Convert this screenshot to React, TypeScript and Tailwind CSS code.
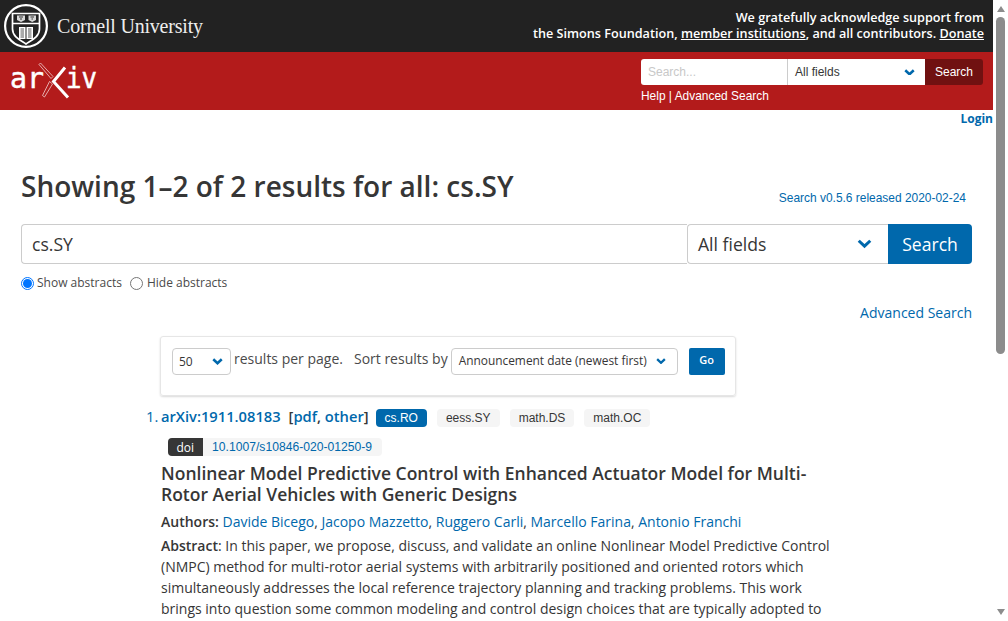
import React from "react";

const Chevron = ({ w, sw = 3, cls = "" }: { w: number; sw?: number; cls?: string }) => (
  <svg width={w} height={w * 0.62} viewBox="0 0 13 8" className={cls} fill="none">
    <path d="M1.5 1.5 L6.5 6.2 L11.5 1.5" stroke="#0068ac" strokeWidth={sw} />
  </svg>
);

const CornellSeal = () => (
  <svg width="46" height="46" viewBox="0 0 46 46" fill="none" className="shrink-0">
    <circle cx="23" cy="23" r="20.9" stroke="#fff" strokeWidth="2.2" />
    <path d="M9.5 10.5 H36.5 V26 C36.5 34 28 37.5 23 41 C18 37.5 9.5 34 9.5 26 Z" stroke="#fff" strokeWidth="1.7" fill="#222" />
    <path d="M9.5 20.5 H36.5" stroke="#fff" strokeWidth="1.5" />
    <path d="M14 12.5 H22 V17 L18 19 L14 17 Z M25.5 12.5 H33 V17 L29.2 19 L25.5 17 Z" fill="#d8d8d8" />
    <path d="M16 14 H20 M27.5 14 H31 M17 16 H19 M28.5 16 H30" stroke="#333" strokeWidth="1" />
    <path d="M16 24 H22.5 V36 H16 Z M23.5 24 H30 V36 H23.5 Z" fill="#fff" />
    <path d="M17.5 26 H21 M17.5 28 H21 M17.5 30 H21 M17.5 32 H21 M17.5 34 H21 M25 26 H28.5 M25 28 H28.5 M25 30 H28.5 M25 32 H28.5 M25 34 H28.5" stroke="#444" strokeWidth="0.9" />
  </svg>
);

const ArxivLogo = () => (
  <svg width="96" height="42" viewBox="0 0 96 42" fill="none" className="shrink-0">
    <text x="0" y="28" fill="#fff" stroke="#fff" strokeWidth="0.5" fontFamily="'DejaVu Sans Mono', monospace" fontSize="29" textLength="34" lengthAdjust="spacingAndGlyphs">ar</text>
    <text x="56" y="28" fill="#fff" stroke="#fff" strokeWidth="0.5" fontFamily="'DejaVu Sans Mono', monospace" fontSize="29" textLength="31" lengthAdjust="spacingAndGlyphs">iv</text>
    <path d="M30.5 3 L29 4.5 L41 18.5 L43 16.5 Z" stroke="#f0d0d0" strokeWidth="0.8" fill="#b31b1b" />
    <path d="M39.5 21.5 L32.5 35.5 L34.5 37 L42.5 24 Z" stroke="#f0d0d0" strokeWidth="0.8" fill="#b31b1b" />
    <path d="M55 7.5 L43.5 21.5 L58 37.5" stroke="#fff" strokeWidth="3" />
  </svg>
);

const Tag = ({ children, primary }: { children: React.ReactNode; primary?: boolean }) => (
  <span
    className={`inline-flex h-[18px] items-center rounded-[4px] px-[9px] font-['Liberation_Sans',sans-serif] text-[12px] ${
      primary ? "bg-[#0068ac] text-white" : "bg-[#f5f5f5] text-[#363636]"
    }`}
  >
    {children}
  </span>
);

const Author = ({ children }: { children: React.ReactNode }) => <a className="text-[#0068ac]">{children}</a>;

const Scrollbar = () => (
  <div className="flex w-[15px] shrink-0 flex-col items-center bg-white">
    <div className="flex h-[17px] w-full items-center justify-center pt-[1px]">
      <div className="h-0 w-0 border-x-[4.5px] border-b-[6px] border-x-transparent border-b-[#8c8c8c]" />
    </div>
    <div className="h-[337px] w-[9px] rounded-[4.5px] bg-[#8c8c8c]" />
    <div className="flex-1" />
    <div className="flex h-[17px] w-full items-center justify-center pb-[1px]">
      <div className="h-0 w-0 border-x-[4.5px] border-t-[6px] border-x-transparent border-t-[#8c8c8c]" />
    </div>
  </div>
);

export default function App() {
  return (
    <div className="flex h-[621px] w-[1008px] overflow-hidden bg-white font-['Open_Sans',sans-serif] text-[#363636]">
      <div className="flex w-[993px] shrink-0 flex-col overflow-hidden">
        <header className="flex h-[52px] shrink-0 items-center justify-between bg-[#222222] pl-[3px] pr-[9px] text-white">
          <div className="flex items-center gap-[8px]">
            <CornellSeal />
            <span className="font-['Liberation_Serif',serif] text-[20px] tracking-[-0.2px] text-[#eeeeee]">Cornell University</span>
          </div>
          <div className="pb-[2px] text-right text-[12.64px] font-semibold leading-[16px]">
            <div>We gratefully acknowledge support from</div>
            <div>
              the Simons Foundation, <a className="underline">member institutions</a>, and all contributors. <a className="underline">Donate</a>
            </div>
          </div>
        </header>

        <div className="flex h-[58px] shrink-0 justify-between bg-[#b31b1b] pl-[10px] pr-[10px]">
          <div className="pt-[8px]">
            <ArxivLogo />
          </div>
          <div className="pt-[7px] font-['Liberation_Sans',sans-serif] text-[12px]">
            <div className="flex h-[26px] w-[342px]">
              <div className="flex w-[147px] items-center rounded-l-[3px] border-r border-[#cccccc] bg-white pl-[7px] text-[#c8c8c8]">Search...</div>
              <div className="flex w-[137px] items-center justify-between bg-white pl-[7px] pr-[10px] text-[#363636]">
                All fields
                <Chevron w={11} />
              </div>
              <div className="flex w-[58px] items-start justify-center rounded-r-[3px] bg-[#701111] pt-[4px] text-white">Search</div>
            </div>
            <div className="mt-[3px] text-[11.95px] text-white">Help | Advanced Search</div>
          </div>
        </div>

        <div className="flex justify-end pt-[1px] text-[12px] font-bold leading-[16px] text-[#0068ac]">Login</div>

        <main className="pl-[21px] pr-[21px]">
          <div className="mt-[39px] flex items-start justify-between pr-[6px]">
            <h1 className="text-[28px] font-semibold leading-[40px] text-[#363636]">Showing 1–2 of 2 results for all: cs.SY</h1>
            <span className="mt-[24px] font-['Liberation_Sans',sans-serif] text-[11.95px] leading-[16px] text-[#0068ac]">Search v0.5.6 released 2020-02-24</span>
          </div>

          <div className="mt-[18px] flex h-[40px] text-[17.6px]">
            <div className="flex flex-1 items-center rounded-l-[4px] border border-[#cccccc] border-r-0 pl-[10px] text-[#363636]">cs.SY</div>
            <div className="flex w-[201px] items-center justify-between rounded-l-[4px] border border-r-0 border-[#cccccc] pl-[10px] pr-[16px]">
              All fields
              <Chevron w={15} sw={2.6} />
            </div>
            <div className="flex w-[84px] items-center justify-center rounded-r-[4px] bg-[#0068ac] text-white">Search</div>
          </div>

          <div className="mt-[10px] flex items-center text-[12px] leading-[18px] text-[#4a4a4a]">
            <span className="flex h-[13px] w-[13px] items-center justify-center rounded-full border border-[#0075ff]">
              <span className="h-[9px] w-[9px] rounded-full bg-[#0075ff]" />
            </span>
            <span className="ml-[3px]">Show abstracts</span>
            <span className="ml-[8px] h-[13px] w-[13px] rounded-full border border-[#767676]" />
            <span className="ml-[4px]">Hide abstracts</span>
          </div>

          <div className="mt-[11px] text-right text-[14px] leading-[20px] text-[#0068ac]">Advanced Search</div>

          <div className="ml-[139px] mt-[13px] flex h-[60px] w-[576px] items-start rounded-[3px] border border-[#e6e6e6] pl-[11px] pt-[11px] shadow-[0_1px_2px_rgba(0,0,0,0.15)]">
            <div className="flex h-[27px] w-[59px] items-center justify-between rounded-[4px] border border-[#cccccc] pl-[6px] pr-[7px] text-[12px]">
              50
              <Chevron w={11} />
            </div>
            <span className="ml-[3px] mt-[1px] text-[14px] leading-[20px] text-[#4a4a4a]">results per page.</span>
            <span className="ml-[11px] mt-[1px] text-[14px] leading-[20px] text-[#4a4a4a]">Sort results by</span>
            <div className="ml-[3px] flex h-[27px] w-[227px] items-center justify-between rounded-[4px] border border-[#cccccc] pb-[1px] pl-[7px] pr-[11px] text-[11.9px]">
              Announcement date (newest first)
              <Chevron w={10} />
            </div>
            <div className="ml-[11px] flex h-[27px] w-[36px] items-start justify-center rounded-[2px] bg-[#0068ac] pt-[4px] text-[11px] font-semibold text-white">Go</div>
          </div>

          <ol className="ml-[125px] mt-[10px] w-[685px] text-[14px] leading-[21px]">
            <li className="flex">
              <span className="w-[15px] shrink-0 text-[14.7px] text-[#0068ac]">1.</span>
              <div className="min-w-0 flex-1">
                <div className="flex h-[21px] items-center text-[14.7px]">
                  <span className="font-semibold text-[#0068ac]">arXiv:1911.08183</span>
                  <span className="ml-[8px] font-semibold text-[#363636]">
                    [<span className="text-[#0068ac]">pdf</span>, <span className="text-[#0068ac]">other</span>]
                  </span>
                  <span className="ml-[7px]"><Tag primary>cs.RO</Tag></span>
                  <span className="ml-[10px]"><Tag>eess.SY</Tag></span>
                  <span className="ml-[10px]"><Tag>math.DS</Tag></span>
                  <span className="ml-[10px]"><Tag>math.OC</Tag></span>
                </div>
                <div className="ml-[7px] mt-[11px] flex h-[18px] items-center text-[12px]">
                  <span className="flex h-[18px] items-center rounded-l-[4px] bg-[#363636] px-[8.5px] text-white">doi</span>
                  <span className="flex h-[18px] items-center rounded-r-[4px] bg-[#f5f5f5] px-[9.5px] font-['Liberation_Sans',sans-serif] text-[12.15px] text-[#0068ac]">10.1007/s10846-020-01250-9</span>
                </div>
                <h2 className="mt-[7px] text-[17.5px] font-semibold leading-[21px] text-[#363636]">
                  Nonlinear Model Predictive Control with Enhanced Actuator Model for Multi-Rotor Aerial Vehicles with Generic Designs
                </h2>
                <p className="mt-[6px] text-[14px] leading-[21px]">
                  <span className="font-semibold">Authors: </span>
                  <Author>Davide Bicego</Author>, <Author>Jacopo Mazzetto</Author>, <Author>Ruggero Carli</Author>, <Author>Marcello Farina</Author>, <Author>Antonio Franchi</Author>
                </p>
                <p className="mt-[3px] text-[14px] leading-[21px]">
                  <span className="font-semibold">Abstract</span>: In this paper, we propose, discuss, and validate an online Nonlinear Model Predictive Control (NMPC) method for multi-rotor aerial systems with arbitrarily positioned and oriented rotors which simultaneously addresses the local reference trajectory planning and tracking problems. This work brings into question some common modeling and control design choices that are typically adopted to
                </p>
              </div>
            </li>
          </ol>
        </main>
      </div>
      <Scrollbar />
    </div>
  );
}
